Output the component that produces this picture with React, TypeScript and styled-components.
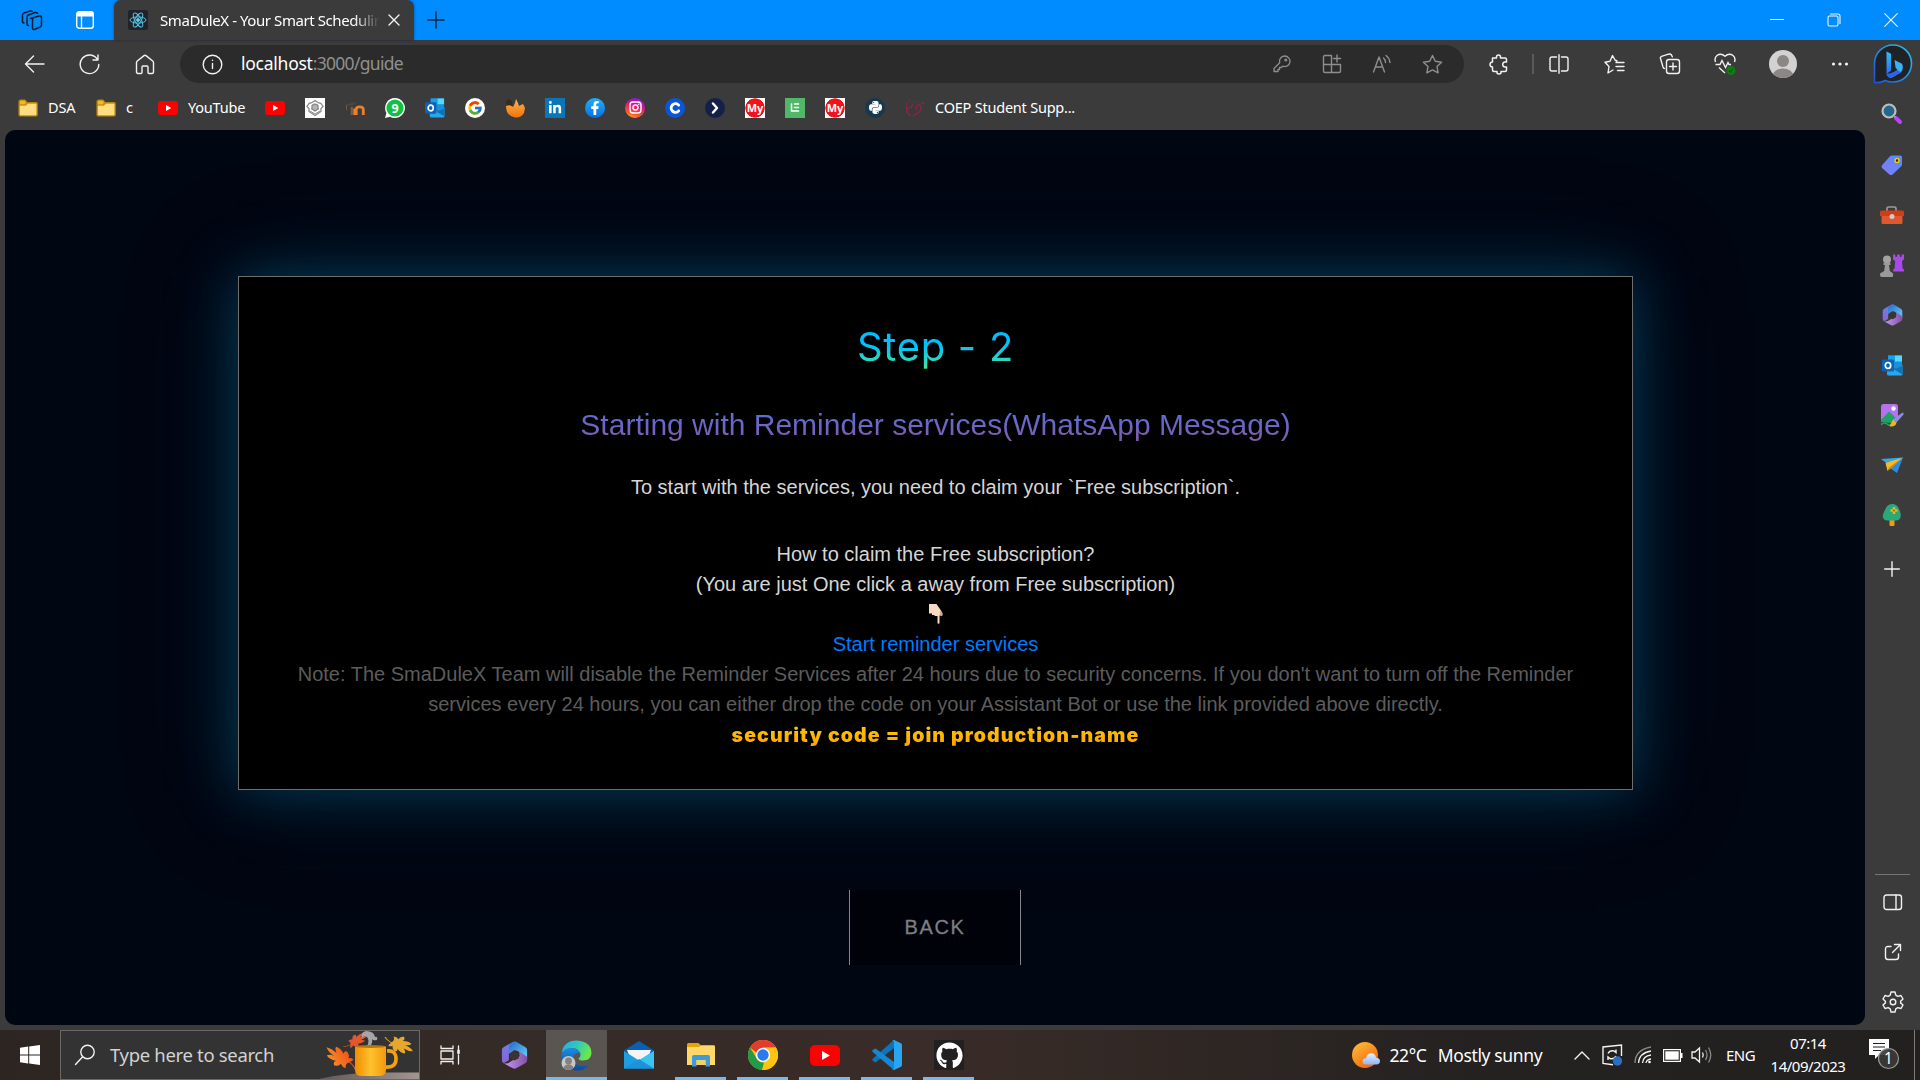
import React from "react";
import styled, { createGlobalStyle, css } from "styled-components";
import { FcGoogle } from "react-icons/fc";
import { FaPython, FaLinkedinIn, FaFacebookF, FaGithub } from "react-icons/fa";

const uiFont = `"Noto Sans", "Open Sans", sans-serif`;
const pageFont = `"Liberation Sans", Arial, sans-serif`;

const Global = createGlobalStyle`
  *, *::before, *::after { box-sizing: border-box; }
  html, body { margin: 0; padding: 0; background: #3b3b3b; }
  svg { display: block; flex: none; }
`;

/* ---------- shell ---------- */

const Screen = styled.div`
  width: 1920px;
  height: 1080px;
  display: flex;
  flex-direction: column;
  overflow: hidden;
  background: #3b3b3b;
  color: #fff;
  font-family: ${uiFont};
`;

const Label = styled.span<{ $size?: number; $ls?: number; $color?: string }>`
  font-size: ${(p) => p.$size ?? 15}px;
  letter-spacing: ${(p) => p.$ls ?? 0}px;
  color: ${(p) => p.$color ?? "#fff"};
  white-space: nowrap;
  line-height: 1;
`;

const Cell = styled.div<{ $w: number; $pt?: number }>`
  width: ${(p) => p.$w}px;
  padding-top: ${(p) => p.$pt ?? 0}px;
  flex: none;
  display: flex;
  align-items: center;
  justify-content: center;
`;

const Line = styled.svg<{ $color?: string; $sw?: number }>`
  fill: none;
  stroke: ${(p) => p.$color ?? "#f2f2f2"};
  stroke-width: ${(p) => p.$sw ?? 1.4};
  stroke-linecap: round;
  stroke-linejoin: round;
`;

/* ---------- title bar ---------- */

const TitleBar = styled.header`
  height: 40px;
  flex: none;
  display: flex;
  align-items: stretch;
  background: #008cff;
`;

const TitleLead = styled.div`
  width: 114px;
  display: flex;
  align-items: center;
  padding-left: 5px;
`;

const Tab = styled.div`
  width: 300px;
  display: flex;
  align-items: center;
  padding-left: 14px;
  background: #3b3b3b;
  border-radius: 7px 7px 0 0;
  box-shadow: 0 0 3px rgba(0, 20, 60, 0.5);
`;

const Favicon = styled.div`
  width: 20px;
  height: 20px;
  border-radius: 2px;
  background: #20232a;
  display: flex;
  align-items: center;
  justify-content: center;
`;

const TabTitle = styled.div`
  width: 220px;
  margin-left: 12px;
  overflow: hidden;
  line-height: 22px;
  mask-image: linear-gradient(90deg, #000 88%, transparent 100%);
`;

const WindowControls = styled.div`
  margin-left: auto;
  display: flex;
`;

/* ---------- toolbar ---------- */

const Toolbar = styled.div`
  height: 48px;
  flex: none;
  display: flex;
  align-items: center;
  padding-left: 7px;
`;

const Address = styled.div`
  width: 1284px;
  height: 38px;
  margin-left: 8px;
  border-radius: 19px;
  background: #2b2b2b;
  display: flex;
  align-items: center;
  padding: 0 7px 0 12px;
`;

const Url = styled.div`
  flex: 1;
  margin-left: 8px;
  display: flex;
`;

const Divider = styled.div`
  width: 2px;
  height: 20px;
  background: #5a5a5a;
`;

const Avatar = styled.div`
  width: 28px;
  height: 28px;
  border-radius: 50%;
  overflow: hidden;
  background: #d4d2d0;
`;

/* ---------- bookmarks ---------- */

const Bookmarks = styled.nav`
  height: 42px;
  flex: none;
  display: flex;
  align-items: center;
  padding: 0 0 3px 18px;
`;

const Named = styled.div<{ $w: number; $gap?: number }>`
  width: ${(p) => p.$w}px;
  flex: none;
  display: flex;
  align-items: center;
  gap: ${(p) => p.$gap ?? 10}px;
`;

const Site = styled.div`
  width: 40px;
  flex: none;
`;

const Badge = styled.div<{ $bg: string; $round?: boolean; $size?: number; $box?: number }>`
  width: ${(p) => p.$box ?? 20}px;
  height: ${(p) => p.$box ?? 20}px;
  display: flex;
  align-items: center;
  justify-content: center;
  color: #fff;
  background: ${(p) => p.$bg};
  font: 700 ${(p) => p.$size ?? 13}px/1 ${uiFont};
  ${(p) => p.$round && css`border-radius: 50%;`}
`;

/* ---------- body ---------- */

const Body = styled.div`
  flex: 1;
  min-height: 0;
  display: flex;
`;

const Viewport = styled.main`
  width: 1860px;
  height: 895px;
  margin-left: 5px;
  padding: 146px 0 0 1px;
  border-radius: 10px;
  overflow: hidden;
  background: #000612;
  display: flex;
  flex-direction: column;
  align-items: center;
  font-family: ${pageFont};
`;

const Card = styled.section`
  width: 1395px;
  height: 514px;
  flex: none;
  padding: 40px 49px 0;
  border: 1px solid #6e6e6e;
  background: #000;
  box-shadow: 0 0 50px rgba(8, 80, 112, 0.66), 0 0 100px rgba(0, 50, 80, 0.36);
  display: flex;
  flex-direction: column;
  align-items: center;
  text-align: center;
`;

const StepTitle = styled.h1`
  margin: 0;
  font: 400 40px/60px Inter, sans-serif;
  letter-spacing: 0.7px;
  color: transparent;
  background: linear-gradient(180deg, #00c0ff 46%, #2ddabb 74%, #4dee74 92%);
  background-clip: text;
`;

const Subtitle = styled.h2`
  margin: 25px 0 0;
  font: 400 30px/45px ${pageFont};
  color: transparent;
  background: linear-gradient(180deg, #4a76f0 0%, #7263bd 60%, #875ba0 100%);
  background-clip: text;
`;

const Copy = styled.p<{ $color?: string; $mt?: number }>`
  margin: ${(p) => p.$mt ?? 0}px 0 0;
  font-size: 20px;
  line-height: 30px;
  white-space: nowrap;
  color: ${(p) => p.$color ?? "#d6d6d6"};
`;

const Pointer = styled.div`
  height: 30px;
  padding-top: 5px;
`;

const StartLink = styled.a`
  font-size: 20px;
  line-height: 30px;
  color: #007bff;
`;

const Code = styled.strong`
  font: 900 19.5px/30px Inter, sans-serif;
  letter-spacing: 1.1px;
  margin-top: 1px;
  color: transparent;
  background: linear-gradient(180deg, #ffd000, #ff9f00);
  background-clip: text;
  white-space: nowrap;
`;

const BackButton = styled.button`
  width: 172px;
  height: 75px;
  flex: none;
  margin: 100px 1px 0 0;
  padding: 0 0 2px;
  border: solid #85868c;
  border-width: 0 1px;
  background: #00020a;
  color: #7c7e84;
  font: 400 20px/1 ${pageFont};
  -webkit-text-stroke: 0.3px #7c7e84;
  letter-spacing: 1.6px;
`;

const Sidebar = styled.aside`
  width: 55px;
  display: flex;
  flex-direction: column;
  align-items: center;
`;

const SideItem = styled.div<{ $h: number }>`
  height: ${(p) => p.$h}px;
  flex: none;
  display: flex;
  align-items: center;
`;

const SideTop = styled.div`
  margin: -42px 1px 0 0;
`;

const SideRule = styled.div`
  width: 35px;
  height: 1px;
  margin-top: auto;
  background: #757575;
`;

const SideBottom = styled.div`
  padding: 3px 0;
`;

/* ---------- taskbar ---------- */

const Taskbar = styled.footer`
  height: 50px;
  flex: none;
  display: flex;
  align-items: stretch;
  background: linear-gradient(90deg, #2c2521 0%, #342a26 25%, #3a2c28 48%, #2f2724 62%, #242120 78%, #222120 100%);
`;

const SearchBox = styled.div`
  width: 360px;
  border: 1px solid #6b6865;
  background: #333333;
  display: flex;
  align-items: center;
  padding-left: 13px;
  overflow: hidden;
`;

const SearchArt = styled.div`
  margin-left: auto;
  align-self: stretch;
`;

const TaskApp = styled.div<{ $open?: boolean; $active?: boolean }>`
  width: ${(p) => (p.$active ? 61 : 62)}px;
  margin-right: ${(p) => (p.$active ? 1 : 0)}px;
  flex: none;
  display: flex;
  align-items: center;
  justify-content: center;
  background-color: ${(p) => (p.$active ? "#5b5551" : "transparent")};
  ${(p) =>
    (p.$open || p.$active) &&
    css`
      background-image: linear-gradient(#76b9ed, #76b9ed);
      background-repeat: no-repeat;
      background-position: ${p.$active ? "0" : "5px"} 100%;
      background-size: ${p.$active ? 61 : 51}px 3px;
    `}
`;

const Tray = styled.div`
  margin-left: auto;
  display: flex;
  align-items: center;
`;

const Clock = styled.div`
  width: 86px;
  display: flex;
  flex-direction: column;
  align-items: center;
  gap: 8px;
`;

const PeekEdge = styled.div`
  width: 6px;
  align-self: stretch;
  border-left: 1px solid #7d7a78;
`;

/* ---------- drawings ---------- */

const Folder = () => (
  <svg width="20" height="18" viewBox="0 0 20 18">
    <path d="M1 2.5Q1 1 2.5 1H7l2 2.5h9q1.2 0 1.2 1.2v11q0 1.3-1.2 1.3H2.2Q1 17 1 15.700z" fill="#c79212" stroke="#b5830b" strokeWidth="1.2" />
    <path d="M1.800 6.800h6l2-2h8.600v10.700q0 .8-.8.8H2.600q-.8 0-.8-.8z" fill="#ffdd80" />
    <path d="M2 2.300q0-.6.6-.6h4L8 3.500 6.500 5.200H2z" fill="#f5b91f" />
  </svg>
);

const YouTube = ({ w = 20 }: { w?: number }) => (
  <svg width={w} height={w * 0.7} viewBox="0 0 30 21">
    <rect width="30" height="21" rx="5" fill="#ff0000" />
    <path d="M12 6v9l8-4.500z" fill="#fff" />
  </svg>
);

const Outlook = ({ s = 21 }: { s?: number }) => (
  <svg width={s} height={s} viewBox="0 0 21 21">
    <rect x="6" y="0.500" width="14" height="13" rx="1" fill="#1a8fdc" />
    <rect x="13" y="0.500" width="7" height="6" fill="#50d9ff" />
    <rect x="6" y="0.500" width="7" height="5" fill="#1a9fe5" />
    <path d="M5 10l8 4 7.500-4v9q0 1.500-1.500 1.500H6.500Q5 20.500 5 19z" fill="#28a8ea" />
    <path d="M20.500 10.500v9L12 14.500z" fill="#1272b8" />
    <rect x="0" y="4.500" width="12" height="12" rx="1.200" fill="#0a63b8" />
    <ellipse cx="6" cy="10.500" rx="2.700" ry="3" fill="none" stroke="#fff" strokeWidth="1.700" />
  </svg>
);

const M365 = ({ s = 23, id }: { s?: number; id: string }) => (
  <svg width={s} height={s * 1.05} viewBox="0 0 24 25">
    <defs>
      <linearGradient id={`${id}a`} x1="0" y1="0" x2="0" y2="1"><stop offset="0" stopColor="#6b7fe8" /><stop offset="1" stopColor="#8c63d8" /></linearGradient>
      <linearGradient id={`${id}b`} x1="0" y1="0" x2="1" y2="1"><stop offset="0" stopColor="#2a66c8" /><stop offset="1" stopColor="#62d5fa" /></linearGradient>
      <linearGradient id={`${id}c`} x1="0" y1="0" x2="1" y2="0"><stop offset="0" stopColor="#c99af2" /><stop offset="1" stopColor="#8350a8" /></linearGradient>
    </defs>
    <path d="M11 .6 2.500 5.200Q.8 6.200.8 8v9q0 1.800 1.500 2.600L7 17V9.500L14 4z" fill={`url(#${id}a)`} />
    <path d="M11 .6q1.200-.6 2.500 0l8 4.600Q23.200 6.200 23.200 8v8l-6.700-4V9.800Q12 7 10.500 9L7 11.500V5.500Q7 3 9 1.800z" fill={`url(#${id}b)`} />
    <path d="M23.200 14v3q0 1.700-1.700 2.700l-8 4.500q-1.500.7-3 0L2.300 19.600q4 .8 6.700-1.600l7.500-4.500V9.500z" fill={`url(#${id}c)`} />
    <path d="M12 8.600 15.800 11v4.300L12 17.200l-4-2V11z" fill="#3a3432" />
  </svg>
);

const Leaf = ({ t, c }: { t: string; c: string }) => (
  <path
    transform={t}
    fill={c}
    d="M0 0Q2-1 3-5Q0-7-4-5Q-5-7-3-9Q-7-9-8-12Q-5-14-3-12Q-6-16-4-19Q-1-18 0-15Q0-20 3-22Q5-19 4-15Q7-18 9-17Q10-14 7-11Q10-12 11-10Q9-7 6-7Q8-6 8-4Q6-4 4-5Q3-1 1 1z"
  />
);

const AutumnArt = () => (
  <svg width="100" height="48" viewBox="0 0 100 48">
    <defs>
      <linearGradient id="mug" x1="0" x2="1"><stop offset="0" stopColor="#f08c00" /><stop offset=".5" stopColor="#ffc12e" /><stop offset="1" stopColor="#f29a0c" /></linearGradient>
      <linearGradient id="leafy" x1="0" x2="1" y2="1"><stop offset="0" stopColor="#ff9a24" /><stop offset="1" stopColor="#e8421c" /></linearGradient>
      <linearGradient id="table" x1="0" x2="1"><stop offset="0" stopColor="#625756" /><stop offset="1" stopColor="#a39591" /></linearGradient>
    </defs>
    <path d="M0 48Q25 42 60 41.500h40V48z" fill="url(#table)" />
    <Leaf t="translate(35.500 38.500) rotate(-56) scale(.98 1.620)" c="url(#leafy)" />
    <Leaf t="translate(25 15) rotate(62) scale(.62 1.200)" c="#e4572e" />
    <Leaf t="translate(67 6) rotate(113) scale(.9 1.380)" c="#e5a72c" />
    <path d="M43 8Q41 1 47 0q8 0 9 6 3-1 2 3-4 1-5-1 1 4-2 7h-3q3-5 0-9-4-3-5 2z" fill="#a5a5a5" />
    <path d="M68 20q9-1 9 8t-11 8" fill="none" stroke="#f6a00e" strokeWidth="3.600" />
    <path d="M36 15.500h31V39q0 6-7 6H43q-7 0-7-6z" fill="url(#mug)" />
    <ellipse cx="51.500" cy="15.500" rx="15.500" ry="1.500" fill="#b97508" />
  </svg>
);

const Edge = () => (
  <svg width="31" height="31" viewBox="0 0 31 31">
    <defs>
      <linearGradient id="eg1" x1="0" x2="1" y2=".3"><stop offset="0" stopColor="#2aa9e8" /><stop offset=".55" stopColor="#30c8c0" /><stop offset="1" stopColor="#6be848" /></linearGradient>
      <linearGradient id="eg2" x1="0" x2="0" y2="1"><stop offset="0" stopColor="#1b8ee0" /><stop offset="1" stopColor="#0c4a9c" /></linearGradient>
    </defs>
    <path d="M.5 14Q2 .5 16 .5q14 1 14.500 12.500Q30 20.500 22 20.500q-4 0-4.500-2 3-2.500 1.500-6Q16 7 9 8.500.8 10 .5 14z" fill="url(#eg1)" />
    <path d="M.5 15Q2 8 10 8q7 .2 9 5-6-1-7 5 1 8 10 8 4 0 6-1.500Q24 31 15 30.500 1 29 .5 15z" fill="url(#eg2)" />
    <circle cx="7.500" cy="23" r="7" fill="#c9c7c5" />
    <circle cx="7.500" cy="21" r="3.400" fill="#85817e" />
    <path d="M2.500 27.800q1.500-3.500 5-3.500t5 3.500q-2 2.200-5 2.200t-5-2.200z" fill="#85817e" />
  </svg>
);

const Mail = () => (
  <svg width="30" height="28" viewBox="0 0 30 28">
    <path d="M0 9.500 15 0l15 9.500v5H0z" fill="#0a5fb4" />
    <path d="M3 9h24l-3 8-9 6-9-6z" fill="#f4f4f4" />
    <path d="M0 10l15 9.500L30 10v17.500H0z" fill="#1e9de0" />
    <path d="M30 10v17.500L15 19.200z" fill="#39c4f2" />
    <path d="M0 27.500 15 18l15 9.500z" fill="#1b93dc" />
  </svg>
);

const Explorer = () => (
  <svg width="28" height="24" viewBox="0 0 28 24">
    <path d="M0 1.500Q0 0 1.500 0h10L14 2.500V8H0z" fill="#e8a400" />
    <path d="M0 4h12l2-1.800h12.500Q28 2.200 28 3.500V22H0z" fill="#ffd869" />
    <path d="M5 23.500V14q0-2 2-2h14q2 0 2 2v9.500h-4.500V17h-9v6.500z" fill="#3f9ad8" />
    <path d="M9.500 22v-5h9v5z" fill="#f5cf66" />
  </svg>
);

const Chrome = () => (
  <svg width="30" height="30" viewBox="0 0 30 30">
    <circle cx="15" cy="15" r="15" fill="#fdc412" />
    <path d="M2 7.500A15 15 0 0 1 28 7.500L15 8q-4 1-6 5z" fill="#e33b2e" />
    <path d="M2 7.500 9 19q3 4 7 3.500L14 30A15 15 0 0 1 2 7.500z" fill="#229a48" />
    <path d="M15 7.500h13A15 15 0 0 1 14 30l7.500-11.500z" fill="#fdc412" />
    <circle cx="15" cy="15" r="7.200" fill="#fff" />
    <circle cx="15" cy="15" r="5.700" fill="#2a7af0" />
  </svg>
);

const VsCode = () => (
  <svg width="30" height="30" viewBox="0 0 30 30">
    <path d="M22 0v8L3.500 22.500 1 21q-1.500-1.200 0-2.500L21 .8z" fill="#0b74bd" />
    <path d="M22 30v-8L3.500 8.500 1 9.800q-1.500 1 0 2.400L21 29.300z" fill="#1488d2" />
    <path d="M22 0l7 3.300q1 .5 1 1.600v20.200q0 1.100-1 1.600L22 30q-1.300.2-2-.6 2 .5 2-1.400V2q0-1.900-2-1.400.7-.8 2-.6z" fill="#2aa5f0" />
  </svg>
);

const Bing = () => (
  <svg width="40" height="40" viewBox="0 0 40 40">
    <defs>
      <linearGradient id="bg1" x1="0" y1="1" x2="1" y2="0"><stop offset="0" stopColor="#1b52d8" /><stop offset="1" stopColor="#30c4ea" /></linearGradient>
      <linearGradient id="bg2" x1="0" y1="0" x2="0" y2="1"><stop offset="0" stopColor="#2ac2f5" /><stop offset="1" stopColor="#2c6df0" /></linearGradient>
    </defs>
    <path d="M1.500 38.500V19.500a18.500 18.500 0 1 1 18.500 18.500q-5 0-8-1.500-4 2.500-10.500 2z" fill="#202226" stroke="url(#bg1)" strokeWidth="1.600" />
    <path d="M13.500 7.500l4.500 2.200v17l-4.500 3z" fill="url(#bg2)" />
    <path d="M21.500 16l7.500 3.800q2.200 5-1 8.500l-8.500 5q-4.500 1.500-6-3.600l4.500.3 6.500-4-2-2.500z" fill="#38b3f2" />
    <path d="M13.500 29.700Q17 30.500 24.500 26l3.500 2.300-8.500 5q-4.500 1.500-6-3.600z" fill="#2c62ee" />
  </svg>
);

const gray = "#8e8e8e";

const KeyIcon = () => (
  <Line width="20" height="20" viewBox="0 0 20 20" $color={gray} $sw={1.3}>
    <path d="M12.500 2a5.300 5.300 0 1 1-1.800 10.200L9.300 13.500H7.500v2H6v2H2V14.500l5.700-5.700A5.300 5.300 0 0 1 12.500 2z" /><circle cx="13.800" cy="6" r=".9" />
  </Line>
);
const AppsIcon = () => (
  <Line width="20" height="20" viewBox="0 0 20 20" $color={gray}>
    <path d="M9.500 18.500v-17H3Q1.500 1.500 1.500 3v14q0 1.500 1.500 1.500h14q1.500 0 1.500-1.500v-6.500h-17M15 1v7M11.500 4.500h7" />
  </Line>
);
const ReadIcon = () => (
  <Line width="21" height="20" viewBox="0 0 21 20" $color={gray}>
    <path d="M1.500 18 7 3l5.500 15M3.300 13h7.500M11.500 4q2 1.500 2 4.500M14 1.500q3.500 2.500 4 7" />
  </Line>
);
const star = "M10.500 1.500l2.800 5.800 6.300.9-4.600 4.400 1.100 6.300-5.600-3-5.600 3L6 12.600 1.400 8.200l6.300-.9z";

const Toolbox = () => (
  <svg width="24" height="19" viewBox="0 0 24 19">
    <path d="M7 5V2.500Q7 1 8.500 1h6Q16 1 16 2.500V5" fill="none" stroke="#9a9a9a" strokeWidth="1.700" />
    <path d="M1.500 8h21v8.500q0 1.500-1.500 1.500H3q-1.500 0-1.500-1.500z" fill="#e0572f" />
    <path d="M0 6q0-1.500 1.500-1.500h21Q24 4.500 24 6v4H0z" fill="#cf3e17" />
    <circle cx="12" cy="10.500" r="2.500" fill="#d0cbc8" />
  </svg>
);

const Games = () => (
  <svg width="24" height="24" viewBox="0 0 24 24">
    <path d="M13 .5h2.300v2.200h1.900V.5h2.600v2.200h1.900V.5H24v5l-2 1.500.6 7.500 1.400 1v2H13.200v-2l1.400-1 .6-7.500-2.200-1.500z" fill="#a94ae8" />
    <circle cx="7" cy="5.500" r="4" fill="#a3a3a3" />
    <path d="M3.500 9h7v2H9l.8 6 3.200 2.500q.5 3.500-1 3.500H1.500Q0 23 0 19.500L4.200 17 5 11H3.500z" fill="#9a9a9a" />
  </svg>
);

const Paint = () => (
  <svg width="24" height="24" viewBox="0 0 24 24">
    <rect x="1" y="1" width="17" height="17" rx="2.500" fill="#b472ef" />
    <path d="M1 17 9 8.500l8 7.500-6 4-10-1z" fill="#1fa365" />
    <circle cx="13.500" cy="5.500" r="2.200" fill="#fff" />
    <path d="M1 21.500q4-2.500 6-.5t5 1" fill="none" stroke="#1fa365" strokeWidth="1.500" />
    <path d="M22.500 9.500q1.500 0 1 2l-7 8-3.500-3z" fill="#8f88f0" />
    <path d="M13 16.500l3.500 3q-.5 4-5.500 4-2 0-1-1.500z" fill="#f7b31c" />
  </svg>
);

const BOOKMARK_ICONS: React.ReactNode[] = [
  <YouTube key="yt" />,
  <Badge key="crest" $bg="#fff">
    <svg width="18" height="18" viewBox="0 0 18 18" fill="none" stroke="#8a8a8a" strokeWidth="1.300">
      <path d="M3 4.500Q6 4 9 1.500q3 2.500 6 3l2 3-2 2v3L9 16.500 3 12.500v-3l-2-2z" />
      <path d="M6 6.500q3-2.500 6 0v3.500L9 12l-3-2z" fill="#b5b5b5" /><path d="M5 9.500 9 12l4-2.500M4 12l5 3 5-3" strokeWidth="1" />
    </svg>
  </Badge>,
  <svg key="moodle" width="20" height="16" viewBox="0 0 20 16">
    <path d="M9.700 15V8.500M11.200 15V9.500q0-2.700 3.400-2.700 3.700 0 3.700 2.700V15" fill="none" stroke="#e8812e" strokeWidth="2.800" />
    <path d="M6.800 15V7" stroke="#8a5a35" strokeWidth="2.200" />
    <path d="M0 5 8 2l4 1-5 3z" fill="#4c4440" /><path d="M1.500 5v5" stroke="#6a5a50" strokeWidth="1" />
  </svg>,
  <svg key="wa" width="20" height="20" viewBox="0 0 20 20">
    <path d="M10 0a10 10 0 1 1-5 18.700L0 20l1.400-5A10 10 0 0 1 10 0z" fill="#fff" /><circle cx="10" cy="10" r="8.600" fill="#12c143" />
    <text x="10" y="14.500" textAnchor="middle" fontFamily="Noto Sans" fontWeight="700" fontSize="12.500" fill="#fff">9</text>
  </svg>,
  <Outlook key="ol" s={20} />,
  <Badge key="g" $bg="#fff" $round><FcGoogle size={16} /></Badge>,
  <svg key="fox" width="20" height="20" viewBox="0 0 20 20">
    <defs><linearGradient id="fx" x1="0" x2="0" y2="1"><stop offset="0" stopColor="#ffb44a" /><stop offset="1" stopColor="#f0730e" /></linearGradient></defs>
    <path d="M1 8l4-1 3 2 2-4 1-4 2 4 1 3 4-2 2 4-1 5q-3 5-9 4.500Q1 18 1 8z" fill="url(#fx)" />
    <path d="M1 3q3-3 5-1 2 2 1 6L4 7Q0 8 1 3z" fill="#3b2a20" />
  </svg>,
  <Badge key="in" $bg="#0a76b8"><FaLinkedinIn size={14} /></Badge>,
  <Badge key="fb" $bg="linear-gradient(#1fb0fb,#0a6fe0)" $round><FaFacebookF size={14} /></Badge>,
  <Badge key="ig" $bg="linear-gradient(200deg,#7a18e8 5%,#e0128a 40%,#ff5a1e 75%,#ffc83a)" $round>
    <Line width="13" height="13" viewBox="0 0 13 13" $color="#fff"><rect x="1" y="1" width="11" height="11" rx="3" /><circle cx="6.500" cy="6.500" r="2.500" /><path d="M9.700 3.300h.1" /></Line>
  </Badge>,
  <Badge key="c" $bg="#0b55d9" $round>
    <Line width="12" height="12" viewBox="0 0 12 12" $color="#fff" $sw={2.8}><path d="M9.700 3.200a4.300 4.300 0 1 0 0 5.600" /></Line>
  </Badge>,
  <Badge key="gt" $bg="#14204a" $round><Line width="8" height="12" viewBox="0 0 8 12" $color="#fff" $sw={2.4}><path d="M2 1.500 6 6l-4 4.500" /></Line></Badge>,
  <Badge key="my1" $bg="radial-gradient(circle,#f5101a 66%,#fff 70%)" $size={11}>My</Badge>,
  <Badge key="le" $bg="#50b868"><Line width="10" height="9" viewBox="0 0 10 9" $color="#fff" $sw={1.5}><path d="M1.500 1v7H8.500M4.500 1h4M4.500 4.500h4" /></Line></Badge>,
  <Badge key="my2" $bg="radial-gradient(circle,#f5101a 66%,#fff 70%)" $size={11}>My</Badge>,
  <Badge key="py" $bg="#17384f" $round><FaPython size={15} /></Badge>,
];

const SIDE_ICONS: React.ReactNode[] = [
  <svg key="s" width="22" height="22" viewBox="0 0 22 22">
    <circle cx="8" cy="8" r="6.500" fill="#23688c" stroke="#bdbdbd" strokeWidth="2.200" />
    <path d="M15 15l4 4" stroke="#bd42f5" strokeWidth="4" strokeLinecap="round" /><path d="M12.500 12.500l2 2" stroke="#999" strokeWidth="2" />
  </svg>,
  <svg key="t" width="22" height="22" viewBox="0 0 22 22">
    <defs><linearGradient id="tag" x1="1" x2="0" y2="1"><stop offset="0" stopColor="#4f8ff0" /><stop offset="1" stopColor="#8579ff" /></linearGradient></defs>
    <path d="M11 1.500h8.500Q21 1.500 21 3v7.500q0 1-1 2l-8.500 8q-1.500 1.200-3 0L1 14q-1-1.500 0-2.700L9 2.300q1-.8 2-.8z" fill="url(#tag)" />
    <circle cx="16" cy="6.500" r="2" fill="#2e2a20" stroke="#f5c518" strokeWidth="1.500" />
  </svg>,
  <Toolbox key="b" />,
  <Games key="g" />,
  <M365 key="m" s={21} id="side" />,
  <Outlook key="o" />,
  <Paint key="p" />,
  <svg key="f" width="22" height="17" viewBox="0 0 22 17">
    <path d="M0 2 22 .5 8 8z" fill="#35a6ec" /><path d="M22 .5 8 8l1.500 3.500L16 16z" fill="#2c8de0" /><path d="M22 .5 4.500 6 6.500 14l2-3.500z" fill="#f7b924" /><path d="M22 .5 8.500 10.500l-2 3.500 3.500-2.500z" fill="#d88c10" />
  </svg>,
  <svg key="tr" width="20" height="22" viewBox="0 0 20 22">
    <rect x="7.500" y="14" width="5" height="8" rx="1" fill="#f09a1a" /><path d="M10 0q5 0 7 5 3 6 1 9.500-1 2-4 2H5q-3 0-4-3Q0 11 3 6 5 0 10 0z" fill="#2aa877" /><path d="M12 3v7M8.500 6.500h7" stroke="#f7b21a" strokeWidth="2.500" /><circle cx="12" cy="6.500" r="1.100" fill="#a96a08" />
  </svg>,
  <Line key="plus" width="16" height="16" viewBox="0 0 16 16"><path d="M8 .7v14.600M.7 8h14.600" /></Line>,
];
const SIDE_HEIGHTS = [51, 51, 51, 49, 50, 50, 50, 50, 50, 58];

export default function App() {
  return (
    <Screen>
      <Global />
      <TitleBar>
        <TitleLead>
          <Cell $w={54}>
            <Line width="22" height="21" viewBox="0 0 22 21" $color="#0a1c30" $sw={1.5}>
              <path d="M9.500 8.500 18 6q2.500-.5 2.500 1.500v7.500q0 1.500-1.500 2l-5 2.300q-2.500.8-2.500-1.300V9.500q0-1 1-1.500M7.500 15.500q-1.500 0-1.500-1.500V7q0-1.500 1.500-2L14 2.500q1.500-.3 2.500.8M3 13q-1.500 0-1.500-1.500V5q0-1.500 1.500-2L9 1q1.200-.3 2 .2" />
            </Line>
          </Cell>
          <Cell $w={52}>
            <svg width="18" height="18" viewBox="0 0 18 18">
              <rect x=".7" y=".7" width="16.600" height="16.600" rx="2.500" fill="none" stroke="#fff" strokeWidth="1.400" />
              <path d="M1 5.500V3Q1 1 3 1h12q2 0 2 2v2.500z" fill="#fff" /><path d="M5.500 5v12" stroke="#fff" strokeWidth="1.300" />
            </svg>
          </Cell>
        </TitleLead>
        <Tab>
          <Favicon>
            <svg width="18" height="18" viewBox="-9 -9 18 18" fill="none" stroke="#53c1de" strokeWidth="1">
              <circle r="1.500" fill="#61dafb" /><ellipse rx="8" ry="3.100" /><ellipse rx="8" ry="3.100" transform="rotate(60)" /><ellipse rx="8" ry="3.100" transform="rotate(120)" />
            </svg>
          </Favicon>
          <TabTitle><Label $size={15} $ls={-0.42}>SmaDuleX - Your Smart Schedulin</Label></TabTitle>
          <Cell $w={28}>
            <Line width="12" height="12" viewBox="0 0 12 12"><path d="M1 1l10 10M11 1 1 11" /></Line>
          </Cell>
        </Tab>
        <Cell $w={43}>
          <Line width="18" height="18" viewBox="0 0 18 18" $color="#06203c"><path d="M9 1v16M1 9h16" /></Line>
        </Cell>
        <WindowControls>
          <Cell $w={57}><Line width="14" height="14" viewBox="0 0 14 14" $sw={1.1}><path d="M.5 6.500h13" /></Line></Cell>
          <Cell $w={57}><Line width="14" height="14" viewBox="0 0 14 14" $sw={1.1}><rect x="1" y="3" width="10" height="10" rx="1.500" /><path d="M3.500 1H11q2 0 2 2v7.500" /></Line></Cell>
          <Cell $w={58}><Line width="14" height="14" viewBox="0 0 14 14" $sw={1.1}><path d="M.7.7l12.600 12.600M13.300.7.7 13.300" /></Line></Cell>
        </WindowControls>
      </TitleBar>

      <Toolbar>
        <Cell $w={55}><Line width="21" height="18" viewBox="0 0 21 18"><path d="M9.500 1 1.500 9l8 8M1.500 9h18.500" /></Line></Cell>
        <Cell $w={55}><Line width="21" height="21" viewBox="0 0 21 21"><path d="M18.500 5.500A9.300 9.300 0 1 0 19.800 10.500M19 1v5h-5" /></Line></Cell>
        <Cell $w={55}><Line width="20" height="21" viewBox="0 0 20 21"><path d="M1.500 8.500Q1.500 7.700 2.300 7L9 1.600q1-.8 2 0L17.700 7q.8.700.8 1.500V18q0 1.500-1.500 1.500h-3q-1 0-1-1V13q0-1-1-1H8q-1 0-1 1v5.500q0 1-1 1H3q-1.500 0-1.500-1.500z" /></Line></Cell>
        <Address>
          <Cell $w={41}><Line width="21" height="21" viewBox="0 0 21 21"><circle cx="10.500" cy="10.500" r="9.300" /><path d="M10.500 9.500v5M10.500 6.300v.1" /></Line></Cell>
          <Url>
            <Label $size={17.500} $ls={-0.25}>localhost</Label>
            <Label $size={17.500} $ls={-0.7} $color="#8f8f8f">:3000/guide</Label>
          </Url>
          <Cell $w={50}><KeyIcon /></Cell>
          <Cell $w={50}><AppsIcon /></Cell>
          <Cell $w={50}><ReadIcon /></Cell>
          <Cell $w={50}><Line width="21" height="21" viewBox="0 0 21 21" $color={gray}><path d={star} /></Line></Cell>
        </Address>
        <Cell $w={2} />
        <Cell $w={66}>
          <Line width="20" height="21" viewBox="0 0 20 21" $sw={1.5}><path d="M3.500 4H7.500V3q0-2 2-2t2 2v1h4.500q1.500 0 1.500 1.500V8h-1.500q-2.300.3-2.300 2.500t2.300 2.500H17.500v3q0 1.500-1.500 1.500h-4v1q0 1.500-2 1.500t-2-1.500v-1H5q-1.500 0-1.500-1.500v-3q-2.500-.3-2.500-2.500T3.500 8z" /></Line>
        </Cell>
        <Divider />
        <Cell $w={50}><Line width="20" height="20" viewBox="0 0 20 20"><path d="M7.500 3H3Q1 3 1 5v10q0 2 2 2h4.500M12.500 3H17q2 0 2 2v10q0 2-2 2h-4.500M10 .8v18.400" /></Line></Cell>
        <Cell $w={61}><Line width="21" height="21" viewBox="0 0 21 21"><path d="M13 7 11 6 8.500 1.500 6 7.300 1 8.200l4 4.300-1 6.500 5-3M12 8.500h8M12 12.500h8M13.500 16.500h6.500" /></Line></Cell>
        <Cell $w={50}><Line width="22" height="22" viewBox="0 0 22 22"><rect x="7.500" y="6.500" width="13" height="14" rx="2.500" /><path d="M14 10v7M10.500 13.500h7M5.500 15.500q-1 0-1.500-1.500L1.500 5.500Q1 4 2.500 3.300L9.500 1.200Q11.500.7 12.500 2l.8 1.800" /></Line></Cell>
        <Cell $w={60}>
          <svg width="22" height="22" viewBox="0 0 22 22" fill="none" stroke="#f2f2f2" strokeWidth="1.400">
            <path d="M1.500 9Q0 5 3 2.500q4-3 8 .8 4-3.800 8-.8 3 2.500 1.500 6.500M1.500 11.500h4.500l2-4 3.500 7 2.500-5 1 2h2M5 14.500l6 5.500" /><circle cx="17" cy="17.500" r="4.500" fill="#107c10" stroke="none" />
            <path d="M15 17.500l1.500 1.500 2.500-3" stroke="#0a4d0a" strokeWidth="1.100" />
          </svg>
        </Cell>
        <Cell $w={56}>
          <Avatar><svg width="28" height="28" viewBox="0 0 28 28" fill="#8a8785"><circle cx="14" cy="11" r="6" /><ellipse cx="14" cy="26" rx="10.500" ry="7.500" /></svg></Avatar>
        </Cell>
        <Cell $w={58}>
          <svg width="18" height="4" viewBox="0 0 18 4" fill="#f2f2f2"><circle cx="2.500" cy="2" r="1.600" /><circle cx="9" cy="2" r="1.600" /><circle cx="15.500" cy="2" r="1.600" /></svg>
        </Cell>
        <Cell $w={48}><Bing /></Cell>
      </Toolbar>

      <Bookmarks>
        <Named $w={78}><Folder /><Label $size={14.500} $ls={-0.1}>DSA</Label></Named>
        <Named $w={62}><Folder /><Label $size={14.500}>c</Label></Named>
        <Named $w={107}><YouTube /><Label $size={14.500} $ls={-0.2}>YouTube</Label></Named>
        {BOOKMARK_ICONS.map((icon, i) => <Site key={i}>{icon}</Site>)}
        <Named $w={180}>
          <Line width="20" height="18" viewBox="0 0 20 18" $color="#8c2448" $sw={1.4}><path d="M1.500 4.500Q1 14 5 16.500M7.500 5.500Q7 9 3 9.500M8.500 16.500Q17 13 16 7.500q-1-3-3.500-1-2 1.500-1 3.500M4 1.500v.1M8.500 2v.1M13 2.500v.1M17 4.500l2-.3" /></Line>
          <Label $size={14.500} $ls={-0.22}>COEP Student Supp...</Label>
        </Named>
      </Bookmarks>

      <Body>
        <Viewport>
          <Card>
            <StepTitle>Step - 2</StepTitle>
            <Subtitle>Starting with Reminder services(WhatsApp Message)</Subtitle>
            <Copy $mt={25}>To start with the services, you need to claim your `Free subscription`.</Copy>
            <Copy $mt={37}>How to claim the Free subscription?<br />(You are just One click a away from Free subscription)</Copy>
            <Pointer>
              <svg width="14" height="20" viewBox="0 0 14 20">
                <path d="M0 0h7.500L12 6.500q2 2.500 1.500 5h-3V19q0 .8-1 .8T8.500 19v-7H5.500v-1H3V9.500H0z" fill="#f9d9c2" /><path d="M11 7l2.500 2-.5 3-2-.5z" fill="#d3a483" />
              </svg>
            </Pointer>
            <StartLink>Start reminder services</StartLink>
            <Copy $color="#5c5c5c">
              Note: The SmaDuleX Team will disable the Reminder Services after 24 hours due to security concerns. If you don't want to turn off the Reminder<br />
              services every 24 hours, you can either drop the code on your Assistant Bot or use the link provided above directly.
            </Copy>
            <Code>security code = join production-name</Code>
          </Card>
          <BackButton>BACK</BackButton>
        </Viewport>
        <Sidebar>
          <SideTop>
            {SIDE_ICONS.map((icon, i) => <SideItem key={i} $h={SIDE_HEIGHTS[i]}><Cell $w={30}>{icon}</Cell></SideItem>)}
          </SideTop>
          <SideRule />
          <SideBottom>
            <SideItem $h={49}><Cell $w={22}><Line width="20" height="17" viewBox="0 0 20 17"><rect x="1" y="1" width="17.500" height="14.500" rx="2.500" /><path d="M13 1v14.500" /></Line></Cell></SideItem>
            <SideItem $h={50}><Cell $w={22}><Line width="18" height="18" viewBox="0 0 18 18"><path d="M7 3.500H4q-2.500 0-2.500 2.500v8q0 2.500 2.500 2.500h8q2.500 0 2.500-2.500v-3M10.500 1.500h6v6M16.500 1.500l-8 8" /></Line></Cell></SideItem>
            <SideItem $h={50}>
              <Line width="22" height="22" viewBox="0 0 22 22"><circle cx="11" cy="11" r="2.800" /><path d="M9 1h4l.8 3.200 2 1.200L19 4.500l2 3.500-2.400 2.200v1.700L21 14l-2 3.500-3.200-.9-2 1.200L13 21H9l-.8-3.200-2-1.200-3.200.9L1 14l2.400-2.100v-1.700L1 8l2-3.500 3.200.9 2-1.200z" /></Line>
            </SideItem>
          </SideBottom>
        </Sidebar>
      </Body>

      <Taskbar>
        <Cell $w={60}>
          <svg width="20" height="20" viewBox="0 0 20 20" fill="#fff"><path d="M0 2.800 8.200 1.600v7.900H0zM9.200 1.500 20 0v9.500H9.200zM0 10.500h8.200v7.900L0 17.200zM9.200 10.500H20V20L9.200 18.500z" /></svg>
        </Cell>
        <SearchBox>
          <Line width="22" height="22" viewBox="0 0 22 22"><circle cx="13.500" cy="8" r="6.700" /><path d="M8.700 12.800 1.500 20.500" /></Line>
          <Cell $w={14} />
          <Label $size={18.500} $ls={-0.33} $color="#d2d2d2">Type here to search</Label>
          <SearchArt><AutumnArt /></SearchArt>
        </SearchBox>
        <Cell $w={60}>
          <Line width="20" height="20" viewBox="0 0 20 20" $sw={1.3}><path d="M1 1v2.500h12V1M1 19v-2.500h12V19M1 6h12v8H1zM18.500 1v3M18.500 10v9" /><path d="M18.500 5.500v2.500" strokeWidth="2.600" /></Line>
        </Cell>
        <Cell $w={3} />
        <TaskApp><M365 s={27} id="task" /></TaskApp>
        <Cell $w={1} />
        <TaskApp $active><Edge /></TaskApp>
        <TaskApp><Mail /></TaskApp>
        <TaskApp $open><Explorer /></TaskApp>
        <TaskApp $open><Chrome /></TaskApp>
        <TaskApp $open><YouTube w={30} /></TaskApp>
        <TaskApp $open><VsCode /></TaskApp>
        <TaskApp $open><Badge $bg="#211f20" $box={30}><FaGithub size={27} /></Badge></TaskApp>
        <Tray>
          <Cell $w={26}>
            <svg width="28" height="28" viewBox="0 0 28 28">
              <defs>
                <linearGradient id="sun" x1="0" x2=".7" y2="1"><stop offset="0" stopColor="#ffc23a" /><stop offset="1" stopColor="#f2650d" /></linearGradient>
                <linearGradient id="cloud" x1="0" x2="0" y2="1"><stop offset="0" stopColor="#e6efff" /><stop offset="1" stopColor="#8fb6f2" /></linearGradient>
              </defs>
              <circle cx="13" cy="14" r="13" fill="url(#sun)" />
              <path d="M14 23.500q-3.500 0-3.500-3t3.500-3.200q1-5 5.500-5 4 .2 4.500 4.500 4 .2 4 3.500 0 3-3.500 3.200z" fill="url(#cloud)" />
            </svg>
          </Cell>
          <Cell $w={58} $pt={2}><Label $size={17.500} $ls={-0.4}>22°C</Label></Cell>
          <Cell $w={106} $pt={2}><Label $size={17.500} $ls={-0.35}>Mostly sunny</Label></Cell>
          <Cell $w={24} />
          <Cell $w={30}><Line width="16" height="9" viewBox="0 0 16 9"><path d="M1 8l7-7 7 7" /></Line></Cell>
          <Cell $w={30}>
            <svg width="21" height="22" viewBox="0 0 21 22" fill="none" stroke="#f2f2f2" strokeWidth="1.400">
              <path d="M19.500 12V1L1 3v16.500l10 1.200M6 9.500q2-3.500 6-2.500l2 1.500V5.500M14 12q-2 3.500-6 2.500l-2-1.500v3" /><circle cx="15.500" cy="17" r="4.700" fill="#2a6fc0" stroke="none" />
            </svg>
          </Cell>
          <Cell $w={31}>
            <svg width="18" height="18" viewBox="0 0 18 18" fill="none" stroke="#f2f2f2" strokeWidth="1.300">
              <path d="M1 17Q1 4 17 1" stroke="#8b8886" /><path d="M4.500 17Q5 7 17 5M8.500 17q.5-7 8.500-8M12 17q.5-3.500 5-4" /><circle cx="15.500" cy="16" r="1.300" fill="#fff" stroke="none" />
            </svg>
          </Cell>
          <Cell $w={29}>
            <svg width="20" height="13" viewBox="0 0 20 13"><rect x=".6" y=".6" width="16.800" height="11.800" fill="none" stroke="#fff" strokeWidth="1.200" /><rect x="2.300" y="2.300" width="13.400" height="8.400" fill="#fff" /><rect x="18" y="4" width="1.500" height="5" fill="#fff" /></svg>
          </Cell>
          <Cell $w={29}>
            <svg width="21" height="18" viewBox="0 0 21 18" fill="none" stroke="#f2f2f2" strokeWidth="1.300"><path d="M1 6h3l4.500-4v14L4 12H1zM11.500 6.500q1.500 2.500 0 5" /><path d="M14.500 4q3 5 0 10M17.500 1.500q4.500 7.500 0 15" stroke="#8b8886" /></svg>
          </Cell>
          <Cell $w={49}><Label $size={15} $ls={-0.5}>ENG</Label></Cell>
          <Clock>
            <Label $size={15} $ls={-0.5}>07:14</Label>
            <Label $size={15} $ls={-0.5}>14/09/2023</Label>
          </Clock>
          <Cell $w={6} />
          <Cell $w={55}>
            <svg width="34" height="34" viewBox="0 0 34 34">
              <path d="M1 1h20v16H11l-4 4v-4H1z" fill="#fff" /><path d="M5 5.500h12M5 9h12M5 12.500h8" stroke="#222120" strokeWidth="1.200" />
              <circle cx="20.500" cy="20.500" r="10" fill="#3b3938" fillOpacity=".92" stroke="#9a9897" strokeWidth="1.200" />
              <text x="20.500" y="26.300" textAnchor="middle" fontFamily="Noto Sans" fontSize="15.500" fill="#fff">1</text>
            </svg>
          </Cell>
          <Cell $w={2} />
          <PeekEdge />
        </Tray>
      </Taskbar>
    </Screen>
  );
}
